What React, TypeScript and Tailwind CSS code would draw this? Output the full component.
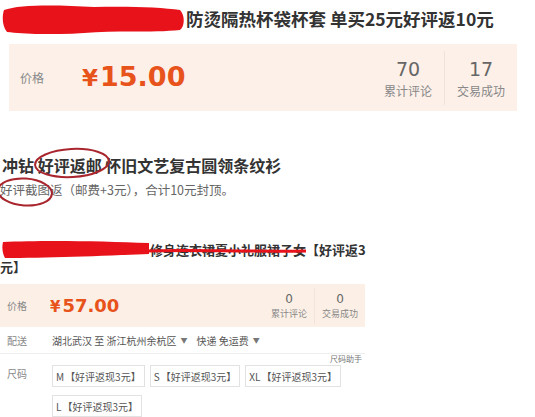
import React from 'react';

const cn = "font-['Noto_Sans_CJK_SC','Liberation_Sans',sans-serif]";
const num = "font-['DejaVu_Sans','Liberation_Sans',sans-serif]";

const Stat = ({ value, label, big }: { value: string; label: string; big?: boolean }) => (
    <div className={big ? 'flex w-[72px] flex-col items-center' : 'flex w-[50px] flex-col items-center'}>
        <span className={big ? `${num} text-[19px] leading-[24px] text-[#666]` : `${num} text-[12px] leading-[14px] text-[#666]`}>
            {value}
        </span>
        <span className={big ? `${cn} mt-[2px] text-[12px] leading-[16px] text-[#888]` : `${cn} mt-[2px] text-[9px] leading-[12px] text-[#888]`}>
            {label}
        </span>
    </div>
);

const SizeButton = ({ size }: { size: string }) => (
    <div className="flex h-[22px] items-center border border-[#e2e2e2] bg-white px-[3px] text-[10px] text-[#555]">
        <span className="mr-[1px]">{size}</span>
        <span>【好评返现3元】</span>
    </div>
);

export default function App() {
    return (
        <div className={`${cn} relative h-[417px] w-[535px] overflow-hidden bg-white`}>
            {/* Product 1 */}
            <div className="flex h-[36px] items-center pl-[2px] pt-[1px]">
                <svg width="182" height="30" viewBox="0 0 182 30" className="shrink-0">
                    <path
                        d="M2 6 C18 0 58 1 92 3 C122 2 160 3 178 6 C183 11 183 22 178 26 C150 29 112 26 82 29 C52 31 22 30 5 28 C0 22 0 12 2 6Z"
                        fill="#e8121a"
                    />
                </svg>
                <span className="ml-[2px] text-[17.5px] font-bold leading-[24px] text-[#333]">
                    防烫隔热杯袋杯套 单买25元好评返10元
                </span>
            </div>

            <div className="ml-[9px] mt-[8px] flex h-[67px] w-[508px] items-center bg-[#fcf0e8]">
                <span className="ml-[11px] w-[62px] text-[12px] text-[#888]">价格</span>
                <span className={`${num} flex items-baseline font-bold text-[#e8531c]`}>
                    <span className="text-[23px]">¥</span>
                    <span className="ml-[2px] text-[27px]">15.00</span>
                </span>
                <div className="ml-auto flex h-[54px] items-center">
                    <Stat big value="70" label="累计评论" />
                    <div className="h-full w-px bg-[#efe2da]" />
                    <Stat big value="17" label="交易成功" />
                </div>
            </div>

            {/* Product 2 */}
            <div className="relative mt-[42px]">
                <div className="h-[24px] pl-[2px] text-[16px] font-bold leading-[24px] text-[#333]">
                    冲钻 好评返邮 怀旧文艺复古圆领条纹衫
                </div>
                <div className="mt-[4px] h-[18px] text-[12.5px] leading-[18px] text-[#666]">
                    好评截图返（邮费+3元），合计10元封顶。
                </div>
                <svg className="absolute left-[33px] top-[-6px]" width="78" height="32" viewBox="0 0 78 32">
                    <ellipse cx="39" cy="16" rx="37" ry="14" fill="none" stroke="#a9262e" strokeWidth="2" transform="rotate(-3 39 16)" />
                </svg>
                <svg className="absolute left-[-6px] top-[23px]" width="60" height="32" viewBox="0 0 60 32">
                    <ellipse cx="31" cy="16" rx="27" ry="13.5" fill="none" stroke="#a9262e" strokeWidth="2" transform="rotate(4 31 16)" />
                </svg>
            </div>

            {/* Product 3 */}
            <div className="mt-[41px] pl-[2px] text-[13px] font-bold leading-[17px] text-[#333]">
                <div className="flex items-center">
                    <svg width="148" height="18" viewBox="0 0 148 18" className="shrink-0">
                        <path d="M1 2 C40 0 100 1 147 3 L147 14 C100 16 40 18 3 18 C0 13 0 6 1 2Z" fill="#e8121a" />
                    </svg>
                    <span className="relative">
                        修身连衣裙夏小礼服裙子女
                        <svg className="absolute left-[-2px] top-[6px]" width="160" height="8" viewBox="0 0 160 8">
                            <path d="M0 4 C40 2 90 5 158 4" stroke="#e8121a" strokeWidth="3" fill="none" />
                        </svg>
                    </span>
                    <span>【好评返3</span>
                </div>
                <div className="-ml-[2px]">元】</div>
            </div>

            <div className="mt-[9px] flex h-[43px] w-[365px] items-center bg-[#fcf0e6]">
                <span className="ml-[7px] w-[43px] text-[10px] text-[#888]">价格</span>
                <span className={`${num} flex items-baseline font-bold text-[#e8531c]`}>
                    <span className="text-[15px]">¥</span>
                    <span className="ml-[2px] text-[18px]">57.00</span>
                </span>
                <div className="ml-auto flex h-[36px] items-center">
                    <Stat value="0" label="累计评论" />
                    <div className="h-full w-px bg-[#f2e4da]" />
                    <Stat value="0" label="交易成功" />
                </div>
            </div>

            <div className="flex h-[27px] w-[365px] items-center border-b border-[#eeeeee] text-[10px] text-[#555]">
                <span className="ml-[7px] w-[45px] text-[#888]">配送</span>
                <span>湖北武汉 至 浙江杭州余杭区</span>
                <span className="ml-[4px] text-[7px] text-[#777]">▼</span>
                <span className="ml-[9px]">快递 免运费</span>
                <span className="ml-[4px] text-[7px] text-[#777]">▼</span>
            </div>
            <div className="flex h-[10px] w-[365px] justify-end pr-[3px] text-[8px] leading-[10px] text-[#777]">
                尺码助手
            </div>
            <div className="mt-[1px] flex">
                <span className="ml-[7px] mt-[1px] w-[45px] text-[10px] text-[#888]">尺码</span>
                <div className="flex w-[300px] flex-wrap gap-x-[5px] gap-y-[8px]">
                    <SizeButton size="M" />
                    <SizeButton size="S" />
                    <SizeButton size="XL" />
                    <SizeButton size="L" />
                </div>
            </div>
        </div>
    );
}
